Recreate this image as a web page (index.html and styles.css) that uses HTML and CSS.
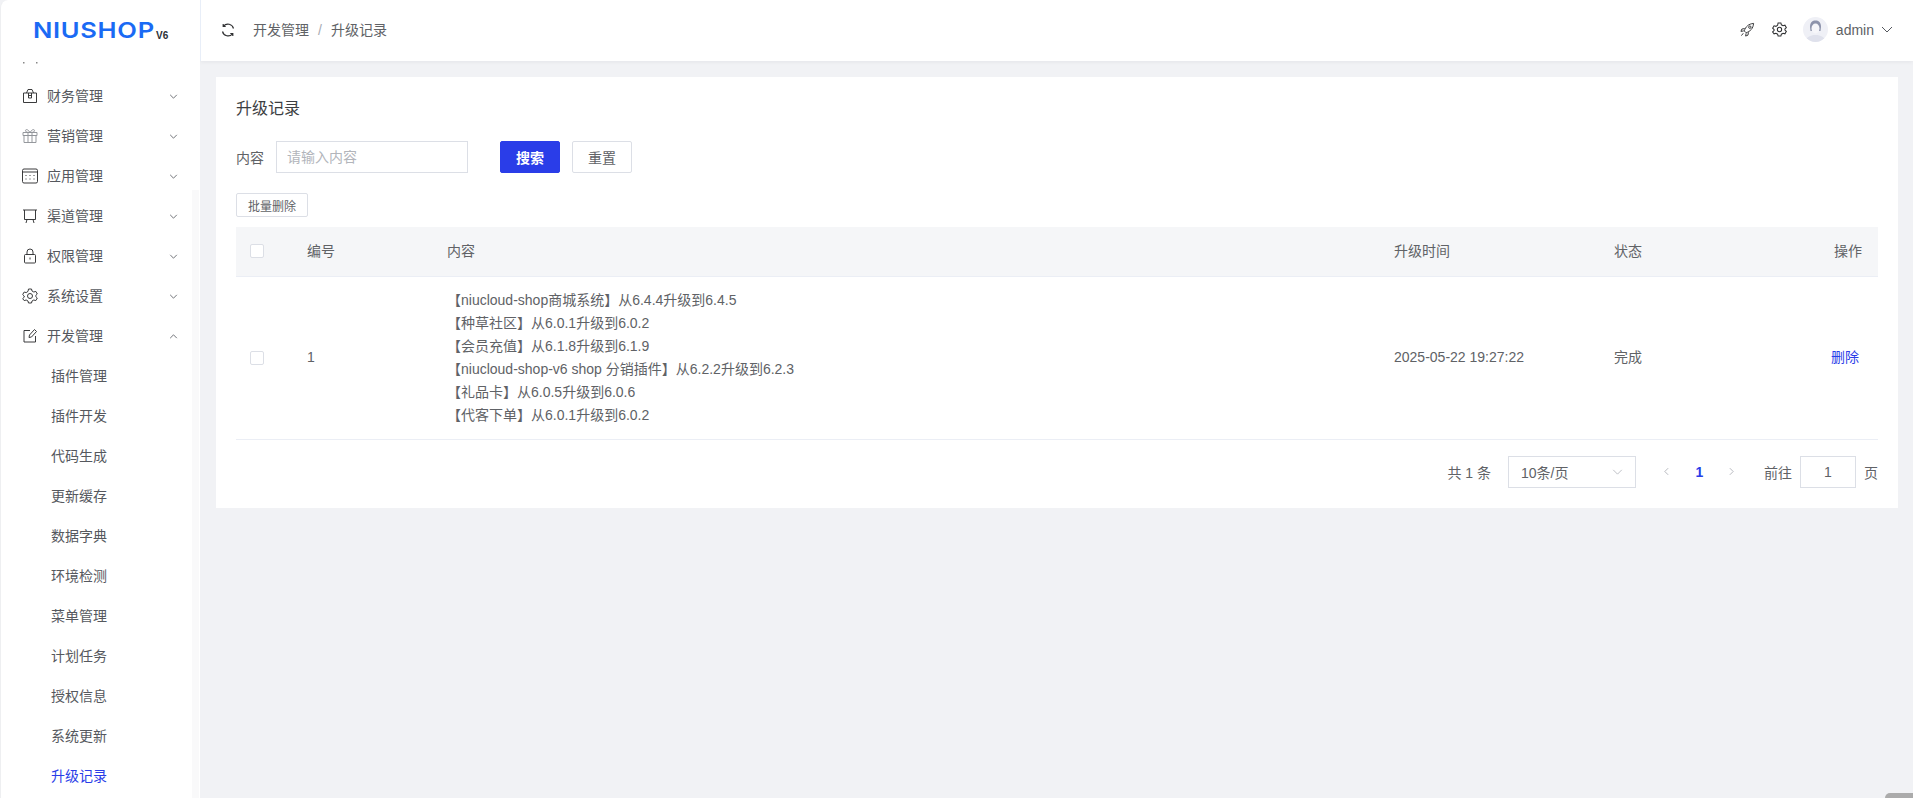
FILE: index.html
```html
<!DOCTYPE html>
<html lang="zh-CN">
<head>
<meta charset="utf-8">
<title>升级记录</title>
<link rel="stylesheet" href="styles.css">
</head>
<body>
<div class="app">
  <aside class="sidebar">
    <div class="logo"><span class="logo-word">NIUSHOP</span><span class="logo-ver">V6</span></div>
    <div class="clipped"><svg width="30" height="4" viewBox="0 0 30 4"><rect x="1" y="1" width="1.5" height="1.5" fill="#888"/><rect x="14" y="1" width="1.5" height="1.5" fill="#888"/></svg></div>
    <nav class="menu">
      <div class="menu-item">
        <svg class="mi" viewBox="0 0 16 16"><path d="M1.500 5h13v9.500h-13zM4.500 5 6 1.500h4L11.500 5M6.500 5v5h3V5M6.500 7.500h3"/></svg>
        <span class="mt">财务管理</span>
        <svg class="chev" viewBox="0 0 10 6"><path d="M1 1l4 4 4-4"/></svg>
      </div>
      <div class="menu-item">
        <svg class="mi light" viewBox="0 0 16 16"><path d="M1 4.500h14v3H1zM2 7.500h12v7H2zM6 4.500v10M10 4.500v10M8 4.500C6 1 3.500 1 3.500 2.700S6 4.500 8 4.500C10 4.500 12.500 4.400 12.500 2.700S10 1 8 4.500"/></svg>
        <span class="mt">营销管理</span>
        <svg class="chev" viewBox="0 0 10 6"><path d="M1 1l4 4 4-4"/></svg>
      </div>
      <div class="menu-item">
        <svg class="mi" viewBox="0 0 16 16"><rect x="0.500" y="1" width="15" height="14" rx="1.500"/><path d="M0.500 4h15M3.500 7.500h1M7.500 7.500h1M11.500 7.500h1M3.500 11h1M7.500 11h1M11.500 11h1"/></svg>
        <span class="mt">应用管理</span>
        <svg class="chev" viewBox="0 0 10 6"><path d="M1 1l4 4 4-4"/></svg>
      </div>
      <div class="menu-item">
        <svg class="mi" viewBox="0 0 16 16"><path d="M1 2h14M2.500 2v9.500h11V2M5 11.500 4 15M11 11.500l1 3.500"/></svg>
        <span class="mt">渠道管理</span>
        <svg class="chev" viewBox="0 0 10 6"><path d="M1 1l4 4 4-4"/></svg>
      </div>
      <div class="menu-item">
        <svg class="mi" viewBox="0 0 16 16"><rect x="2.500" y="6.500" width="11" height="8.500" rx="1"/><path d="M5 6.500V4a3 3 0 0 1 6 0v2.500M8 9.500v2"/></svg>
        <span class="mt">权限管理</span>
        <svg class="chev" viewBox="0 0 10 6"><path d="M1 1l4 4 4-4"/></svg>
      </div>
      <div class="menu-item">
        <svg class="mi" viewBox="0 0 16 16"><path d="M6.500 1h3l.5 2 1.800 1 2-.6 1.500 2.600-1.500 1.400v1.200l1.500 1.400-1.500 2.600-2-.6-1.800 1-.5 2h-3l-.5-2-1.800-1-2 .6L.7 10.600l1.500-1.400V8L.7 6.600 2.200 4l2 .6L6 3.400z"/><circle cx="8" cy="8" r="2.500"/></svg>
        <span class="mt">系统设置</span>
        <svg class="chev" viewBox="0 0 10 6"><path d="M1 1l4 4 4-4"/></svg>
      </div>
      <div class="menu-item">
        <svg class="mi" viewBox="0 0 16 16"><path d="M8 2.500H2v11.500h11.500V8M7 9.500l.5-2.500 5-5.500 2 2-5 5.500z"/></svg>
        <span class="mt">开发管理</span>
        <svg class="chev" viewBox="0 0 10 6"><path d="M1 5l4-4 4 4"/></svg>
      </div>
      <div class="sub-item">插件管理</div>
      <div class="sub-item">插件开发</div>
      <div class="sub-item">代码生成</div>
      <div class="sub-item">更新缓存</div>
      <div class="sub-item">数据字典</div>
      <div class="sub-item">环境检测</div>
      <div class="sub-item">菜单管理</div>
      <div class="sub-item">计划任务</div>
      <div class="sub-item">授权信息</div>
      <div class="sub-item">系统更新</div>
      <div class="sub-item active">升级记录</div>
    </nav>
    <div class="side-track"></div>
  </aside>
  <div class="main">
    <header class="topbar">
      <svg class="refresh" viewBox="0 0 14 14"><path d="M12.500 5.500A5.700 5.700 0 0 0 2.500 3.200M1.500 8.500a5.700 5.700 0 0 0 10 2.300M2.200 1v2.500h2.500M11.800 13v-2.500H9.300"/></svg>
      <div class="crumbs"><span>开发管理</span><span class="sep">/</span><span>升级记录</span></div>
      <div class="top-right">
        <svg class="ticon rocket" viewBox="0 0 16 16"><path d="M6 11 4.500 9.500C6 5 9 2 14.500 1.500 14 7 11 10 6.500 11.500zM5 7 2 7.500 1 10l3-.5M9 11l-.5 3-2.500 1 .5-3M3.500 12 1.500 14.500"/><circle cx="10.500" cy="5.500" r="1.300"/></svg>
        <svg class="ticon gear" viewBox="0 0 16 16"><path d="M6.500 1h3l.5 2 1.800 1 2-.6 1.500 2.600-1.500 1.400v1.200l1.500 1.400-1.500 2.600-2-.6-1.800 1-.5 2h-3l-.5-2-1.800-1-2 .6L.7 10.600l1.500-1.400V8L.7 6.600 2.200 4l2 .6L6 3.400z"/><circle cx="8" cy="8" r="2.300"/></svg>
        <svg class="avatar" viewBox="0 0 25 25"><defs><clipPath id="avc"><circle cx="12.500" cy="12.500" r="12.500"/></clipPath></defs><g clip-path="url(#avc)"><rect width="25" height="25" fill="#eff0f6"/><path d="M7 10c0-5 2.500-6.500 5.500-6.500S18 5 18 10l-.5 4h-10z" fill="#8d93ab"/><ellipse cx="12.500" cy="11.500" rx="4" ry="5" fill="#f6f6fa"/><path d="M3 25c0-5 4-7 9.500-7s9.500 2 9.500 7z" fill="#dfe1ec"/></g></svg>
        <span class="uname">admin</span>
        <svg class="chev user-chev" viewBox="0 0 12 7"><path d="M1 1l5 5 5-5"/></svg>
      </div>
    </header>
    <main class="content">
      <section class="card">
        <h1 class="title">升级记录</h1>
        <form class="search">
          <label class="f-label">内容</label>
          <input class="f-input" type="text" placeholder="请输入内容">
          <button type="button" class="btn primary">搜索</button>
          <button type="button" class="btn">重置</button>
        </form>
        <button type="button" class="btn-sm">批量删除</button>
        <table class="grid">
          <colgroup>
            <col class="c-check"><col class="c-id"><col class="c-text"><col class="c-time"><col class="c-state"><col class="c-op">
          </colgroup>
          <thead>
            <tr>
              <th class="cell-check"><span class="checkbox"></span></th>
              <th>编号</th><th>内容</th><th>升级时间</th><th>状态</th><th class="right">操作</th>
            </tr>
          </thead>
          <tbody>
            <tr>
              <td class="cell-check"><span class="checkbox"></span></td>
              <td>1</td>
              <td>
                <div>【niucloud-shop商城系统】从6.4.4升级到6.4.5</div>
                <div>【种草社区】从6.0.1升级到6.0.2</div>
                <div>【会员充值】从6.1.8升级到6.1.9</div>
                <div>【niucloud-shop-v6 shop 分销插件】从6.2.2升级到6.2.3</div>
                <div>【礼品卡】从6.0.5升级到6.0.6</div>
                <div>【代客下单】从6.0.1升级到6.0.2</div>
              </td>
              <td>2025-05-22 19:27:22</td>
              <td>完成</td>
              <td class="right"><a class="link">删除</a></td>
            </tr>
          </tbody>
        </table>
        <div class="pager">
          <span class="total">共 1 条</span>
          <div class="select"><span>10条/页</span><svg class="chev sel-chev" viewBox="0 0 12 7"><path d="M1 1l5 5 5-5"/></svg></div>
          <svg class="pg-arrow prev" viewBox="0 0 6 10"><path d="M5 1 1 5l4 4"/></svg>
          <span class="pg-num">1</span>
          <svg class="pg-arrow next" viewBox="0 0 6 10"><path d="M1 1l4 4-4 4"/></svg>
          <span class="goto">前往</span>
          <input class="pg-input" type="text" value="1">
          <span class="unit">页</span>
        </div>
      </section>
    </main>
  </div>
</div>
<div class="page-thumb"></div>
</body>
</html>
```
FILE: styles.css
```css
* { box-sizing: border-box; }
html, body { margin: 0; height: 100%; overflow: hidden; }
body {
  font-family: "Liberation Sans", "Noto Sans CJK SC", sans-serif;
  font-size: 14px;
  color: #606266;
  background: #f1f2f5;
}
.app { display: flex; height: 798px; }
.sidebar {
  position: relative;
  width: 200px;
  flex: none;
  height: 798px;
  overflow: hidden;
  background: #fff;
  border-left: 1px solid #eeeff1;
  border-top-left-radius: 8px;
}
.logo { height: 60px; display: flex; align-items: flex-start; padding: 17px 0 0 32px; }
.logo-word {
  display: inline-block;
  width: 123px;
  font-family: Inter, "Liberation Sans", sans-serif;
  font-size: 22px;
  font-weight: 600;
  line-height: 26px;
  color: #1a6af4;
  letter-spacing: 0.6px;
  white-space: nowrap;
  transform: scaleX(1.16);
  transform-origin: left center;
}
.logo-ver {
  font-family: "Liberation Sans", sans-serif;
  font-size: 10px;
  font-weight: 700;
  color: #2b2f36;
  margin: 13px 0 0 0;
  line-height: 12px;
}
.clipped { height: 16px; padding-left: 21px; line-height: 0; }
.menu { display: flex; flex-direction: column; }
.menu-item {
  height: 40px;
  line-height: 40px;
  display: flex;
  align-items: center;
  padding-left: 21px;
  color: #55585e;
}
.mi { width: 16px; height: 16px; flex: none; fill: none; stroke: #303133; stroke-width: 0.950; }
.mi.light { stroke: #909399; }
.mt { margin-left: 9px; width: 56px; white-space: nowrap; }
.chev { fill: none; stroke: #55585e; stroke-width: 1; }
.menu-item .chev { width: 9px; height: 5px; margin-left: 66px; }
.sub-item { height: 40px; line-height: 40px; padding-left: 50px; color: #55585e; }
.sub-item.active { color: #2a3de8; }
.side-track { position: absolute; left: 191px; top: 190px; bottom: 0; width: 7px; background: #f9f9fa; }
.main { flex: 1; min-width: 0; display: flex; flex-direction: column; }
.topbar {
  height: 61px;
  flex: none;
  display: flex;
  align-items: center;
  background: #fff;
  border-left: 1px solid #e8eef8;
  box-shadow: 0 1px 4px rgba(0, 21, 41, 0.06);
  padding: 0 20px 2px 20px;
}
.refresh { width: 14px; height: 14px; fill: none; stroke: #303133; stroke-width: 1.200; }
.crumbs { display: flex; align-items: baseline; margin: 0 0 2px 18px; color: #606266; }
.sep { margin: 0 9px; color: #a8abb2; }
.top-right { margin-left: auto; display: flex; align-items: center; }
.ticon { width: 15px; height: 15px; fill: none; stroke: #303133; stroke-width: 1.100; }
.rocket { stroke-width: 1; }
.gear { margin-left: 17px; }
.avatar { width: 25px; height: 25px; margin-left: 16px; }
.uname { margin-left: 8px; color: #606266; }
.user-chev { width: 12px; height: 7px; margin-left: 7px; }
.content { flex: 1; padding: 16px 15px 0 16px; }
.card { background: #fff; padding: 20px 20px 0 20px; height: 431px; }
.title { margin: 1px 0 0; font-size: 16px; font-weight: 400; line-height: 22px; color: #3c3e42; }
.search { display: flex; align-items: center; margin-top: 21px; }
.f-label { width: 40px; color: #606266; }
.f-input {
  width: 192px;
  height: 32px;
  border: 1px solid #dcdfe6;
  padding: 0 10px;
  font: inherit;
  outline: none;
}
.f-input::placeholder { color: #b2b5bb; }
.btn {
  width: 60px;
  height: 32px;
  margin-left: 12px;
  border: 1px solid #dcdfe6;
  border-radius: 2px;
  background: #fff;
  color: #606266;
  font: inherit;
  padding: 0;
}
.btn.primary { margin-left: 32px; background: #2a3de8; border-color: #2a3de8; color: #fff; font-weight: 700; }
.btn-sm {
  display: block;
  width: 72px;
  height: 24px;
  margin-top: 20px;
  border: 1px solid #dcdfe6;
  border-radius: 2px;
  background: #fff;
  color: #606266;
  font: inherit;
  font-size: 12px;
  padding: 0;
}
.grid { width: 100%; margin-top: 10px; border-collapse: collapse; table-layout: fixed; }
.c-check { width: 59px; }
.c-id { width: 140px; }
.c-text { width: 947px; }
.c-time { width: 220px; }
.c-state { width: 180px; }
.grid th {
  height: 49px;
  padding: 0 12px 2px;
  background: #f5f6f8;
  border-bottom: 1px solid #ebeef5;
  font-weight: 400;
  text-align: left;
  color: #606266;
}
.grid td {
  padding: 12px;
  line-height: 23px;
  border-bottom: 1px solid #ebeef5;
  color: #606266;
}
.grid .cell-check { padding: 0 0 0 14px; line-height: 0; }
.grid .right { text-align: right; padding-right: 16px; }
.checkbox { display: inline-block; width: 14px; height: 14px; border: 1px solid #dcdfe6; border-radius: 2px; background: #fff; }
.link { color: #2a3de8; margin-right: 3px; }
.pager { display: flex; align-items: center; justify-content: flex-end; margin-top: 16px; height: 32px; }
.select {
  width: 128px;
  height: 32px;
  margin-left: 17px;
  border: 1px solid #dcdfe6;
  display: flex;
  align-items: center;
  justify-content: space-between;
  padding: 0 12px;
  color: #606266;
}
.sel-chev { width: 11px; height: 6px; stroke: #b4b7bd; }
.pg-arrow { width: 5px; height: 9px; fill: none; stroke: #a8abb2; stroke-width: 1; }
.prev { margin-left: 28px; }
.pg-num { margin-left: 26px; width: 9px; color: #2a3de8; font-weight: 700; text-align: center; }
.next { margin-left: 25px; }
.goto { margin-left: 30px; }
.pg-input {
  width: 56px;
  height: 32px;
  margin-left: 8px;
  border: 1px solid #dcdfe6;
  text-align: center;
  font: inherit;
  color: #606266;
  padding: 0;
  outline: none;
}
.unit { margin-left: 8px; }
.page-thumb {
  position: absolute;
  right: 0;
  bottom: 0;
  width: 28px;
  height: 5px;
  background: #ababab;
  border-top-left-radius: 5px;
}
```
